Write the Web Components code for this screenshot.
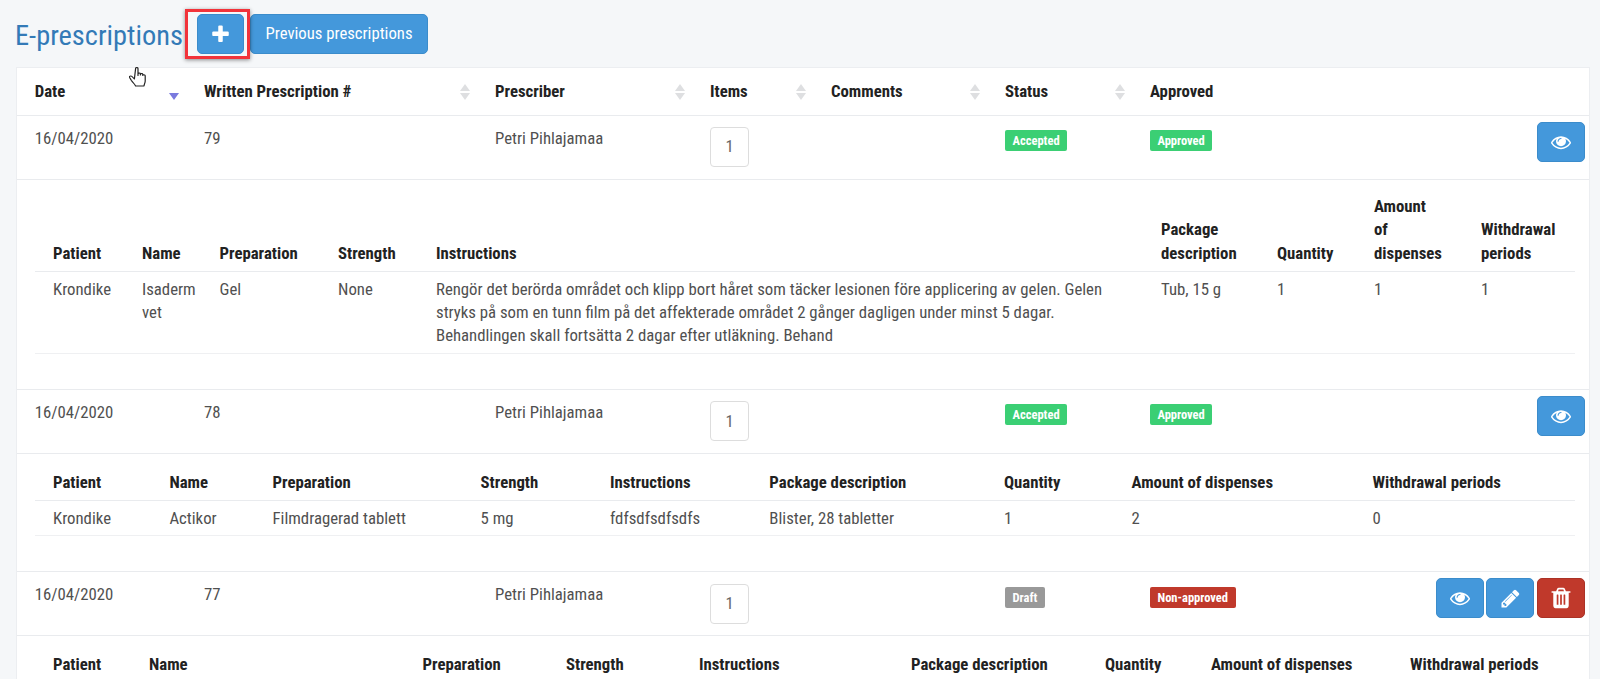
<!DOCTYPE html>
<html lang="en">
<head>
<meta charset="utf-8">
<title>E-prescriptions</title>
<style>
  html, body { margin: 0; height: 679px; overflow: hidden; background: #f5f7f9; }
  body { font-family: "Roboto Condensed", "Liberation Sans Narrow", Roboto, sans-serif; font-size: 16.75px; line-height: 23.3px; color: #505050; }
</style>
</head>
<body>
<ep-page>
  <ep-toolbar slot="toolbar"></ep-toolbar>
  <ep-head-row></ep-head-row>

  <ep-row date="16/04/2020" number="79" prescriber="Petri Pihlajamaa" items="1" status="Accepted" approved="Approved" actions="view">
    <ep-detail widths="89 77.5 118.5 98 725 116 97 107 1fr" data-set="a" tight></ep-detail>
  </ep-row>

  <ep-row date="16/04/2020" number="78" prescriber="Petri Pihlajamaa" items="1" status="Accepted" approved="Approved" actions="view">
    <ep-detail widths="116.4 103.1 208.1 129.4 159.4 234.6 127.6 240.9 1fr" data-set="b"></ep-detail>
  </ep-row>

  <ep-row date="16/04/2020" number="77" prescriber="Petri Pihlajamaa" items="1" status="Draft" approved="Non-approved" actions="view edit delete">
    <ep-detail widths="96 273.5 143.5 133 212 194 106 199 1fr" data-set="c"></ep-detail>
  </ep-row>
</ep-page>

<script>
  const ICONS = {
    plus: 'M1600 736v192q0 40-28 68t-68 28h-416v416q0 40-28 68t-68 28h-192q-40 0-68-28t-28-68v-416h-416q-40 0-68-28t-28-68v-192q0-40 28-68t68-28h416v-416q0-40 28-68t68-28h192q40 0 68 28t28 68v416h416q40 0 68 28t28 68z',
    view: 'M1664 960q-152-236-381-353 61 104 61 225 0 185-131.500 316.500t-316.500 131.500-316.500-131.500-131.500-316.500q0-121 61-225-229 117-381 353 133 205 333.500 326.500t434.500 121.500 434.500-121.500 333.500-326.500zm-720-384q0-20-14-34t-34-14q-125 0-214.500 89.500t-89.500 214.500q0 20 14 34t34 14 34-14 14-34q0-86 61-147t147-61q20 0 34-14t14-34zm848 384q0 34-20 69-140 230-376.500 368.500t-499.500 138.500-499.500-139-376.500-368q-20-35-20-69t20-69q140-229 376.500-368t499.500-139 499.500 139 376.500 368q20 35 20 69z',
    edit: 'M491 1536l91-91-235-235-91 91v107h128v128h107zm523-928q0-22-22-22-10 0-17 7l-542 542q-7 7-7 17 0 22 22 22 10 0 17-7l542-542q7-7 7-17zm-54-192l416 416-832 832h-416v-416zm683 96q0 53-37 90l-166 166-416-416 166-165q36-38 90-38 53 0 91 38l235 234q37 39 37 91z',
    delete: 'M704 1376v-704q0-14-9-23t-23-9h-64q-14 0-23 9t-9 23v704q0 14 9 23t23 9h64q14 0 23-9t9-23zm256 0v-704q0-14-9-23t-23-9h-64q-14 0-23 9t-9 23v704q0 14 9 23t23 9h64q14 0 23-9t9-23zm256 0v-704q0-14-9-23t-23-9h-64q-14 0-23 9t-9 23v704q0 14 9 23t23 9h64q14 0 23-9t9-23zm-544-992h448l-48-117q-7-9-17-11h-317q-10 2-17 11zm928 32v64q0 14-9 23t-23 9h-96v948q0 83-47 143.500t-113 60.500h-832q-66 0-113-58.500t-47-141.500v-952h-96q-14 0-23-9t-9-23v-64q0-14 9-23t23-9h309l70-167q15-37 54-63t79-26h320q40 0 79 26t54 63l70 167h309q14 0 23 9t9 23z'
  };

  const ICON_SIZE = { view: 20, edit: 21, delete: 24 };

  const icon = ( name, size ) => `<svg width="${size}" height="${size}" viewBox="0 0 1792 1792" fill="currentColor"><path d="${ICONS[name]}"/></svg>`;

  // Shared grid for the header row and the prescription rows
  const MAIN_COLUMNS = '169.3px 291px 215px 121px 174px 145px 1fr';

  const HEAD = ['Patient', 'Name', 'Preparation', 'Strength', 'Instructions', 'Package description', 'Quantity', 'Amount of dispenses', 'Withdrawal periods'];

  const DETAILS = {
    a: ['Krondike', 'Isaderm vet', 'Gel', 'None', 'Rengör det berörda området och klipp bort håret som täcker lesionen före applicering av gelen. Gelen stryks på som en tunn film på det affekterade området 2 gånger dagligen under minst 5 dagar. Behandlingen skall fortsätta 2 dagar efter utläkning. Behand', 'Tub, 15 g', '1', '1', '1'],
    b: ['Krondike', 'Actikor', 'Filmdragerad tablett', '5 mg', 'fdfsdfsdfsdfs', 'Blister, 28 tabletter', '1', '2', '0'],
    c: []
  };

  class EpPage extends HTMLElement {
    constructor() {
      super();
      this.attachShadow( {mode: 'open'} ).innerHTML = `
        <style>
          :host { display: block; height: 679px; overflow: hidden; padding: 0 10px 0 16px; }
          div[part=card] {
            background: #fff;
            border: 1px solid #eceef1;
            border-bottom: 0;
          }
        </style>
        <slot name="toolbar"></slot>
        <div part="card"><slot></slot></div>
      `;
    }
  }

  class EpToolbar extends HTMLElement {
    constructor() {
      super();
      this.attachShadow( {mode: 'open'} ).innerHTML = `
        <style>
          :host { display: flex; align-items: flex-start; height: 67px; position: relative; }
          h1 {
            margin: 21px 0 0 -1px;
            width: 182px;
            font: 400 28.400px/30px "Roboto Condensed", "Liberation Sans Narrow", Roboto, sans-serif;
            color: #337ab7;
          }
          button {
            margin-top: 14px;
            height: 40px;
            padding: 1px 0 0;
            background: #4498db;
            border: 1px solid #3b8ccb;
            border-radius: 5px;
            color: #fff;
            font: 400 16.700px/1 "Roboto Condensed", "Liberation Sans Narrow", Roboto, sans-serif;
            display: flex;
            align-items: center;
            justify-content: center;
          }
          .add { width: 47px; margin-right: 6px; }
          .previous { width: 178px; }
          .mark {
            position: absolute;
            left: 169px;
            top: 9px;
            width: 59px;
            height: 44px;
            border: 3px solid #f2333a;
            box-shadow: 0 1px 4px rgba( 0, 0, 0, .45 );
          }
          .cursor { position: absolute; left: 113px; top: 66px; }
        </style>
        <h1>E-prescriptions</h1>
        <button class="add" aria-label="Add">${icon( 'plus', 21 )}</button>
        <button class="previous">Previous prescriptions</button>
        <div class="mark"></div>
        <svg class="cursor" width="24" height="24" viewBox="0 0 20 24" preserveAspectRatio="none" fill="#fff" stroke="#222" stroke-width="1" stroke-linejoin="round">
          <path d="M5.500 2.500c0-1.300 2-1.300 2 0v7l0-1.500c0-1.200 2-1.200 2 0v1l0-.5c0-1.200 2-1.200 2 0v1c0-1 2-1 2 .2v5.300c0 2-.8 3-1 5h-7c-.8-2-2-3-3.500-5.500l-1.500-3c-.6-1.300 1-2 2-1l2 2.500z"/>
        </svg>
      `;
    }
  }

  class EpHeadRow extends HTMLElement {
    constructor() {
      super();
      const columns = ['Date', 'Written Prescription #', 'Prescriber', 'Items', 'Comments', 'Status', 'Approved'];
      const sort = ( index ) => {
        if( index === 0 ) {
          return `<svg width="10" height="16" viewBox="0 0 10 16"><path d="M0 9h10l-5 7z" fill="#7a7ade"/></svg>`;
        }
        if( index === 6 ) return '';
        return `<svg width="10" height="16" viewBox="0 0 10 16" fill="#dedfe1"><path d="M5 0l5 7H0z"/><path d="M0 9h10l-5 7z"/></svg>`;
      };
      this.attachShadow( {mode: 'open'} ).innerHTML = `
        <style>
          :host {
            display: grid;
            grid-template-columns: ${MAIN_COLUMNS};
            padding-left: 17.7px;
            height: 46.5px;
            border-bottom: 1px solid #e9ebee;
            font-weight: 700;
            color: #222;
          }
          div {
            display: flex;
            align-items: center;
            justify-content: space-between;
            padding-right: 25px;
          }
          svg { margin-top: 2px; }
        </style>
        ${columns.map( ( label, index ) => `<div><span>${label}</span>${sort( index )}</div>` ).join( '' )}
      `;
    }
  }

  class EpBadge extends HTMLElement {
    constructor() {
      super();
      this.attachShadow( {mode: 'open'} ).innerHTML = `
        <style>
          :host {
            display: inline-block;
            height: 21px;
            padding: 0 7.500px;
            border-radius: 2px;
            background: var( --badge-color, #3bcf74 );
            color: #fff;
            font-size: 12.500px;
            font-weight: 700;
            line-height: 21px;
          }
        </style>
        <slot></slot>
      `;
    }
  }

  class EpRow extends HTMLElement {
    connectedCallback() {
      if( this.shadowRoot ) return;

      const get = ( name ) => this.getAttribute( name );
      const badgeColor = { Accepted: '#3bcf74', Approved: '#3bcf74', Draft: '#999', 'Non-approved': '#c0392b' };
      const actions = get( 'actions' ).split( ' ' ).map( ( name ) => `
        <button class="${name}" aria-label="${name}">${icon( name, ICON_SIZE[name] )}</button>
      ` ).join( '' );

      this.attachShadow( {mode: 'open'} ).innerHTML = `
        <style>
          :host { display: block; border-bottom: 1px solid #e9ebee; }
          div[part=summary] {
            display: grid;
            grid-template-columns: ${MAIN_COLUMNS};
            padding-left: 17.7px;
            height: 63px;
            border-bottom: 1px solid #e9ebee;
          }
          div[part=summary] > span { padding-top: 11px; }
          .count {
            width: 39px;
            height: 40px;
            margin-top: 11.500px;
            box-sizing: border-box;
            border: 1px solid #ddd;
            border-radius: 4px;
            display: flex;
            align-items: center;
            justify-content: center;
            font-size: 16.500px;
            color: #666;
          }
          div[part=summary] > span.badge, .approved .badge { padding-top: 12.500px; }
          .approved { display: flex; justify-content: space-between; }
          .actions {
            display: flex;
            justify-content: flex-end;
            gap: 2px;
            padding: 6px 4px 0 0;
          }
          button {
            width: 48px;
            height: 40px;
            padding: 0;
            background: #4498db;
            border: 1px solid #3b8ccb;
            border-radius: 5px;
            color: #fff;
            display: flex;
            align-items: center;
            justify-content: center;
          }
          button.delete { background: #c0392b; border-color: #ab3226; margin-left: 1px; }
        </style>
        <div part="summary">
          <span>${get( 'date' )}</span>
          <span>${get( 'number' )}</span>
          <span>${get( 'prescriber' )}</span>
          <div class="count">${get( 'items' )}</div>
          <span></span>
          <span class="badge"><ep-badge style="--badge-color:${badgeColor[get( 'status' )]}">${get( 'status' )}</ep-badge></span>
          <div class="approved">
            <span class="badge"><ep-badge style="--badge-color:${badgeColor[get( 'approved' )]}">${get( 'approved' )}</ep-badge></span>
            <div class="actions">${actions}</div>
          </div>
        </div>
        <slot></slot>
      `;
    }
  }

  class EpDetail extends HTMLElement {
    connectedCallback() {
      if( this.shadowRoot ) return;

      const cells = DETAILS[this.dataset.set];
      const columns = this.getAttribute( 'widths' ).split( ' ' ).map( ( w ) => w.endsWith( 'fr' ) ? w : `${w}px` ).join( ' ' );

      this.attachShadow( {mode: 'open'} ).innerHTML = `
        <style>
          :host { display: block; padding: 0 14px 35px 18px; }
          :host( [tight] ) .th { padding-top: 15.5px; }
          :host( [tight] ) .th:nth-child( 8 ) span { max-width: 66px; }
          div[part=table] { display: grid; grid-template-columns: ${columns}; }
          .th, .td { padding-left: 18px; padding-right: 18px; }
          .th {
            padding-top: 17px;
            padding-bottom: 6px;
            font-weight: 700;
            color: #222;
            border-bottom: 1px solid #e9ebee;
            display: flex;
            align-items: flex-end;
          }
          .td { padding-top: 6px; padding-bottom: 5px; border-bottom: 1px solid #eff0f2; }
        </style>
        <div part="table">
          ${HEAD.map( ( label ) => `<div class="th"><span>${label}</span></div>` ).join( '' )}
          ${cells.map( ( value ) => `<div class="td">${value}</div>` ).join( '' )}
        </div>
      `;
    }
  }

  customElements.define( 'ep-page', EpPage );
  customElements.define( 'ep-toolbar', EpToolbar );
  customElements.define( 'ep-head-row', EpHeadRow );
  customElements.define( 'ep-badge', EpBadge );
  customElements.define( 'ep-row', EpRow );
  customElements.define( 'ep-detail', EpDetail );
</script>
</body>
</html>
